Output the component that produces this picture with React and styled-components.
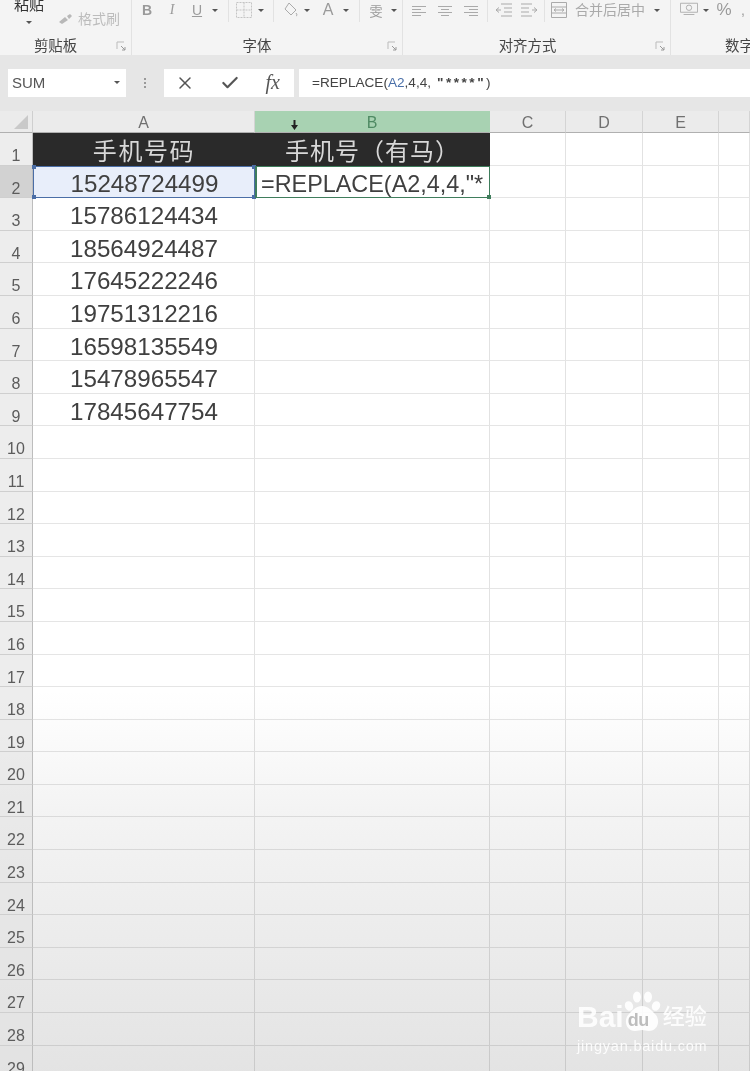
import React from "react"
import styled, { createGlobalStyle } from "styled-components"
import { X, Check } from "lucide-react"

const Global = createGlobalStyle`
    html, body {
        margin: 0;
        padding: 0;
        background: #fff;
    }
`

const Page = styled.div`
    position: relative;
    width: 750px;
    height: 1071px;
    overflow: hidden;
    font-family: "Liberation Sans", "Noto Sans CJK SC", sans-serif;
    filter: blur(0.6px);
`

/* ribbon */
const Ribbon = styled.div`
    display: flex;
    height: 55px;
    overflow: hidden;
    background: #f4f4f4;
`

const Group = styled.div`
    position: relative;
    flex: none;
    width: ${p => p.$w}px;
    height: 55px;
    box-sizing: border-box;
    border-right: 1px solid #e2e2e2;
    display: flex;
    flex-direction: column;
    overflow: hidden;
`

const GroupTools = styled.div`
    height: 36px;
    display: flex;
    align-items: flex-start;
    padding-top: 1px;
    padding-left: ${p => p.$pad || 0}px;
    gap: ${p => p.$gap || 0}px;
`

const GroupLabel = styled.div`
    text-align: center;
    font-size: 14.4px;
    line-height: 18px;
    color: #444;
    padding-right: ${p => p.$shift || 0}px;
`

const Launcher = styled.svg`
    position: absolute;
    right: 5px;
    bottom: 4px;
    width: 10px;
    height: 10px;
`

const PasteCol = styled.div`
    width: 58px;
    text-align: center;
    font-size: 15px;
    color: #333;
    line-height: 14px;
    margin-top: -3px;
    box-sizing: border-box;
`

const Caret = styled.span`
    display: block;
    width: 0;
    height: 0;
    border-left: 3px solid transparent;
    border-right: 3px solid transparent;
    border-top: 3px solid #555;
    margin: ${p => p.$m || "5px auto 0"};
    flex: none;
`

const Painter = styled.div`
    display: flex;
    align-items: center;
    gap: 4px;
    margin-top: 10px;
    font-size: 14px;
    line-height: 16px;
    color: #bcbcbc;
    white-space: nowrap;
`

const ToolBtn = styled.div`
    flex: none;
    width: ${p => p.$w || 20}px;
    height: 18px;
    display: flex;
    align-items: center;
    justify-content: center;
    color: ${p => p.$c || "#9a9a9a"};
    font-size: ${p => p.$fs || 14}px;
    font-weight: ${p => p.$fw || 400};
    font-style: ${p => p.$fi ? "italic" : "normal"};
    text-decoration: ${p => p.$u ? "underline" : "none"};
    font-family: ${p => p.$serif ? '"Liberation Serif", serif' : "inherit"};
`

const Sep = styled.span`
    flex: none;
    width: 1px;
    height: 22px;
    background: #e2e2e2;
    margin: -1px ${p => p.$m ?? 6}px 0;
`

const MergeText = styled.span`
    flex: none;
    font-size: 14px;
    line-height: 18px;
    color: #aaa;
    margin-left: 2px;
`

/* formula bar */
const FormulaBar = styled.div`
    height: 56px;
    box-sizing: border-box;
    background: #e6e6e6;
    display: flex;
    align-items: center;
    padding: 0 0 1px 8px;
`

const NameBox = styled.div`
    width: 118px;
    height: 28px;
    box-sizing: border-box;
    background: #fff;
    display: flex;
    align-items: center;
    justify-content: space-between;
    padding: 0 6px 0 4px;
    font-size: 15px;
    color: #555;
`

const Dots = styled.div`
    width: 38px;
    display: flex;
    flex-direction: column;
    align-items: center;
    gap: 2px;

    & i {
        display: block;
        width: 2px;
        height: 2px;
        background: #999;
    }
`

const FxBox = styled.div`
    width: 130px;
    height: 28px;
    background: #fff;
    display: flex;
    align-items: center;
    justify-content: space-between;
    padding: 0 14px 0 11px;
    box-sizing: border-box;
    color: #555;
`

const FxGlyph = styled.span`
    font-family: "Liberation Serif", serif;
    font-style: italic;
    font-size: 20px;
    color: #555;
`

const FormulaInput = styled.div`
    flex: 1;
    margin-left: 5px;
    height: 28px;
    background: #fff;
    display: flex;
    align-items: center;
    padding-left: 13px;
    font-size: 13.6px;
    color: #444;
    white-space: pre;
`

const Ref = styled.span`
    color: #4a6fa8;
`

const Stars = styled.span`
    letter-spacing: 2.5px;
    font-weight: 700;
    margin-left: 6px;
`

/* sheet */
const Sheet = styled.div`
    display: grid;
    grid-template-columns: 33px 222px 235px 76px 77px 76px 1fr;
    grid-template-rows: 22px repeat(29, 32.6px);
    background: linear-gradient(#fff 0, #fff 60%, #f4f4f4 72%, #e3e3e3 100%);
`

const Corner = styled.div`
    background: #ebebeb;
    border-bottom: 1px solid #b0b0b0;
    border-right: 1px solid #cfcfcf;
    position: relative;
    box-sizing: border-box;

    &::after {
        content: "";
        position: absolute;
        right: 4px;
        bottom: 3px;
        border-left: 14px solid transparent;
        border-bottom: 14px solid #c9c9c9;
    }
`

const ColHead = styled.div`
    position: relative;
    box-sizing: border-box;
    background: ${p => p.$active ? "#a8d2b2" : "#ebebeb"};
    border-bottom: 1px solid #b0b0b0;
    border-right: 1px solid ${p => p.$active ? "#a8d2b2" : "#d4d4d4"};
    color: ${p => p.$active ? "#4f8a63" : "#707070"};
    font-size: 16px;
    line-height: 23px;
    text-align: center;
`

const DownCursor = styled.svg`
    position: absolute;
    left: 36px;
    top: 9px;
    width: 7px;
    height: 10px;
`

const RowHead = styled.div`
    box-sizing: border-box;
    background-color: ${p => p.$active ? "#d2d2d2" : "rgba(226,226,226,0.62)"};
    border-right: 1px solid #bdbdbd;
    border-bottom: 1px solid #cfcfcf;
    color: #5c5c5c;
    font-size: 16px;
    line-height: 18px;
    text-align: center;
    padding-top: 14px;
    overflow: hidden;
`

const Cell = styled.div`
    box-sizing: border-box;
    border-right: 1px solid rgba(0, 0, 0, 0.11);
    border-bottom: 1px solid rgba(0, 0, 0, 0.1);
    font-size: 24.2px;
    line-height: 36px;
    padding-left: 1px;
    text-align: center;
    color: #404040;
    white-space: nowrap;
    overflow: hidden;
`

const TitleCell = styled.div`
    background: #2a2a2a;
    color: #d8d8d8;
    font-size: 24px;
    letter-spacing: ${p => p.$ls || 0}px;
    line-height: 37px;
    text-align: center;
    white-space: nowrap;
    overflow: hidden;
`

const ActiveCell = styled.div`
    position: relative;
    box-sizing: border-box;
    background: #e8eefa;
    border: 1px solid #4b6ea6;
    font-size: 24.2px;
    line-height: 34px;
    padding-left: 1px;
    text-align: center;
    color: #404040;
`

const EditCell = styled.div`
    position: relative;
    box-sizing: border-box;
    background: #fff;
    border: 1px solid #3f7d5c;
    border-left-width: 2px;
    font-size: 23.4px;
    line-height: 34px;
    padding-left: 4px;
    color: #404040;
    white-space: nowrap;
`

const Handle = styled.span`
    position: absolute;
    width: 4px;
    height: 4px;
    background: ${p => p.$c};
    ${p => p.$top ? "top: -2px;" : "bottom: -2px;"}
    ${p => p.$left ? "left: -2px;" : "right: -2px;"}
`

/* baidu watermark */
const Watermark = styled.div`
    position: absolute;
    left: 577px;
    top: 990px;
    width: 136px;
    color: rgba(255, 255, 255, 0.88);
    pointer-events: none;
`

const MarkTop = styled.div`
    display: flex;
    align-items: flex-end;
    height: 42px;
`

const MarkBai = styled.span`
    font-size: 30px;
    font-weight: 700;
    line-height: 30px;
    margin-right: -1px;
`

const Paw = styled.div`
    position: relative;
    width: 38px;
    height: 41px;
    flex: none;
`

const PawDu = styled.span`
    position: absolute;
    left: 5px;
    bottom: 3px;
    color: #bdbdbd;
    font-size: 18px;
    font-weight: 700;
    line-height: 18px;
    letter-spacing: -0.5px;
`

const MarkCn = styled.span`
    font-size: 22px;
    line-height: 30px;
    font-weight: 500;
    margin-left: 2px;
    white-space: nowrap;
`

const MarkUrl = styled.div`
    font-size: 14.5px;
    line-height: 18px;
    letter-spacing: 0.8px;
    margin-top: 5px;
    white-space: nowrap;
`

const Phones = [
    "15786124434",
    "18564924487",
    "17645222246",
    "19751312216",
    "16598135549",
    "15478965547",
    "17845647754"
]

const launcher = (
    <Launcher viewBox="0 0 10 10" fill="none" stroke="#bbb">
        <path d="M1 8V1h7" />
        <path d="M5 5l4 4M9 6v3H6" stroke="#999" />
    </Launcher>
)

const svgIcon = (w, h, children) => (
    <svg width={w} height={h} viewBox={`0 0 ${w} ${h}`} fill="none" stroke="#aaa">
        {children}
    </svg>
)

const lines = rows =>
    rows.map(([x1, x2], i) => (
        <path key={i} d={`M${x1} ${3.5 + i * 3}H${x2}`} />
    ))

const EmptyCells = () => (
    <>
        <Cell />
        <Cell />
        <Cell />
        <Cell />
        <Cell />
    </>
)

export default function App() {
    const rows = []
    for (let n = 10; n <= 29; n++) rows.push(n)

    return (
        <Page>
            <Global />
            <Ribbon>
                <Group $w={132}>
                    <GroupTools>
                        <PasteCol>
                            粘贴
                            <Caret $m="9px auto 0" />
                        </PasteCol>
                        <Painter>
                            <svg width="16" height="12" viewBox="0 0 16 12" fill="#b8b8b8">
                                <path d="M1 9l6-5 3 3-6 4zM9 3l3-2 2 2-3 3z" />
                            </svg>
                            格式刷
                        </Painter>
                    </GroupTools>
                    <GroupLabel $shift={20}>剪贴板</GroupLabel>
                    {launcher}
                </Group>
                <Group $w={271}>
                    <GroupTools $pad={5}>
                        <ToolBtn $w={20} $fw={700}>B</ToolBtn>
                        <ToolBtn $w={30} $fi $serif>I</ToolBtn>
                        <ToolBtn $w={20} $u>U</ToolBtn>
                        <Caret $m="8px 5px 0" />
                        <Sep $m={5} />
                        <ToolBtn $w={20}>
                            {svgIcon(16, 16, (
                                <path d="M.5.5h15v15H.5zM8 .5v15M.5 8h15" strokeDasharray="2 1" stroke="#c4c4c4" />
                            ))}
                        </ToolBtn>
                        <Caret $m="8px 4px 0" />
                        <Sep $m={5} />
                        <ToolBtn $w={24}>
                            {svgIcon(16, 16, (
                                <path d="M6 1l7 7-5 5-6-6zM13 11c1 1.5 1.5 2.5 0 3" />
                            ))}
                        </ToolBtn>
                        <Caret $m="8px 8px 0 1px" />
                        <ToolBtn $w={20} $fs={16}>A</ToolBtn>
                        <Caret $m="8px 5px 0" />
                        <Sep $m={5} />
                        <ToolBtn $w={22} $fs={13}>雯</ToolBtn>
                        <Caret $m="8px 4px 0" />
                    </GroupTools>
                    <GroupLabel $shift={20}>字体</GroupLabel>
                    {launcher}
                </Group>
                <Group $w={268}>
                    <GroupTools $pad={6} $gap={6}>
                        <ToolBtn $w={20}>
                            {svgIcon(14, 14, lines([[0, 14], [0, 9], [0, 14], [0, 9]]))}
                        </ToolBtn>
                        <ToolBtn $w={20}>
                            {svgIcon(14, 14, lines([[0, 14], [3, 11], [0, 14], [3, 11]]))}
                        </ToolBtn>
                        <ToolBtn $w={20}>
                            {svgIcon(14, 14, lines([[0, 14], [5, 14], [0, 14], [5, 14]]))}
                        </ToolBtn>
                        <Sep $m={0} />
                        <ToolBtn $w={20}>
                            {svgIcon(18, 16, <path d="M6 2h11M9 6h8M9 10h8M6 14h11M6 8H1l3-2.5M1 8l3 2.5" />)}
                        </ToolBtn>
                        <ToolBtn $w={18}>
                            {svgIcon(18, 16, <path d="M1 2h11M1 6h8M1 10h8M1 14h11M12 8h5l-3-2.5M17 8l-3 2.5" />)}
                        </ToolBtn>
                        <Sep $m={0} />
                        <ToolBtn $w={16}>
                            {svgIcon(16, 16, <path d="M.5.5h15v15H.5zM.5 5h15M.5 11h15M3 8h10M3 8l2-1.5M3 8l2 1.5M13 8l-2-1.5M13 8l-2 1.5" />)}
                        </ToolBtn>
                        <MergeText>合并后居中</MergeText>
                        <Caret $m="8px 0 0 3px" />
                    </GroupTools>
                    <GroupLabel $shift={18}>对齐方式</GroupLabel>
                    {launcher}
                </Group>
                <Group $w={138}>
                    <GroupTools $pad={9} $gap={2}>
                        <ToolBtn $w={18}>
                            {svgIcon(20, 16, <path d="M.5.5h19v10H.5zM7 5.5a3 3 0 1 0 6 0a3 3 0 1 0-6 0M4 13h12" />)}
                        </ToolBtn>
                        <Caret $m="8px 3px 0" />
                        <ToolBtn $w={20} $fs={17}>%</ToolBtn>
                        <ToolBtn $w={14}>,</ToolBtn>
                    </GroupTools>
                    <GroupLabel>数字</GroupLabel>
                </Group>
            </Ribbon>

            <FormulaBar>
                <NameBox>
                    SUM
                    <Caret $m="0" />
                </NameBox>
                <Dots>
                    <i />
                    <i />
                    <i />
                </Dots>
                <FxBox>
                    <X size={20} strokeWidth={1.8} />
                    <Check size={20} strokeWidth={2.6} />
                    <FxGlyph>fx</FxGlyph>
                </FxBox>
                <FormulaInput>
                    =REPLACE(<Ref>A2</Ref>,4,4,<Stars>"****"</Stars>)
                </FormulaInput>
            </FormulaBar>

            <Sheet>
                <Corner />
                <ColHead>A</ColHead>
                <ColHead $active>
                    <DownCursor viewBox="0 0 7 10" fill="#222">
                        <path d="M2.5 0h2v5H7L3.5 10 0 5h2.5z" />
                    </DownCursor>
                    B
                </ColHead>
                <ColHead>C</ColHead>
                <ColHead>D</ColHead>
                <ColHead>E</ColHead>
                <ColHead />

                <RowHead>1</RowHead>
                <TitleCell $ls={1.6}>手机号码</TitleCell>
                <TitleCell $ls={1}>手机号（有马）</TitleCell>
                <Cell />
                <Cell />
                <Cell />
                <Cell />

                <RowHead $active>2</RowHead>
                <ActiveCell>
                    15248724499
                    <Handle $c="#4b6ea6" $top $left />
                    <Handle $c="#4b6ea6" $top />
                    <Handle $c="#4b6ea6" $left />
                    <Handle $c="#4b6ea6" />
                </ActiveCell>
                <EditCell>
                    =REPLACE(A2,4,4,"*
                    <Handle $c="#3f7d5c" />
                </EditCell>
                <Cell />
                <Cell />
                <Cell />
                <Cell />

                {Phones.map((phone, i) => (
                    <React.Fragment key={phone}>
                        <RowHead>{i + 3}</RowHead>
                        <Cell>{phone}</Cell>
                        <EmptyCells />
                    </React.Fragment>
                ))}

                {rows.map(n => (
                    <React.Fragment key={n}>
                        <RowHead>{n}</RowHead>
                        <Cell />
                        <EmptyCells />
                    </React.Fragment>
                ))}
            </Sheet>

            <Watermark>
                <MarkTop>
                    <MarkBai>Bai</MarkBai>
                    <Paw>
                        <svg width="38" height="41" viewBox="0 0 38 41" fill="rgba(255,255,255,0.9)">
                            <ellipse cx="6" cy="15" rx="4" ry="5" transform="rotate(-25 6 15)" />
                            <ellipse cx="14" cy="6" rx="4" ry="5.5" />
                            <ellipse cx="25" cy="6" rx="4" ry="5.5" />
                            <ellipse cx="33" cy="15" rx="4" ry="5" transform="rotate(25 33 15)" />
                            <path d="M19 15c6 0 9 4 13 8 6 6 3 17-6 17-3 0-5-1-7-1s-4 1-7 1c-9 0-12-11-6-17 4-4 7-8 13-8z" />
                        </svg>
                        <PawDu>du</PawDu>
                    </Paw>
                    <MarkCn>经验</MarkCn>
                </MarkTop>
                <MarkUrl>jingyan.baidu.com</MarkUrl>
            </Watermark>
        </Page>
    )
}
